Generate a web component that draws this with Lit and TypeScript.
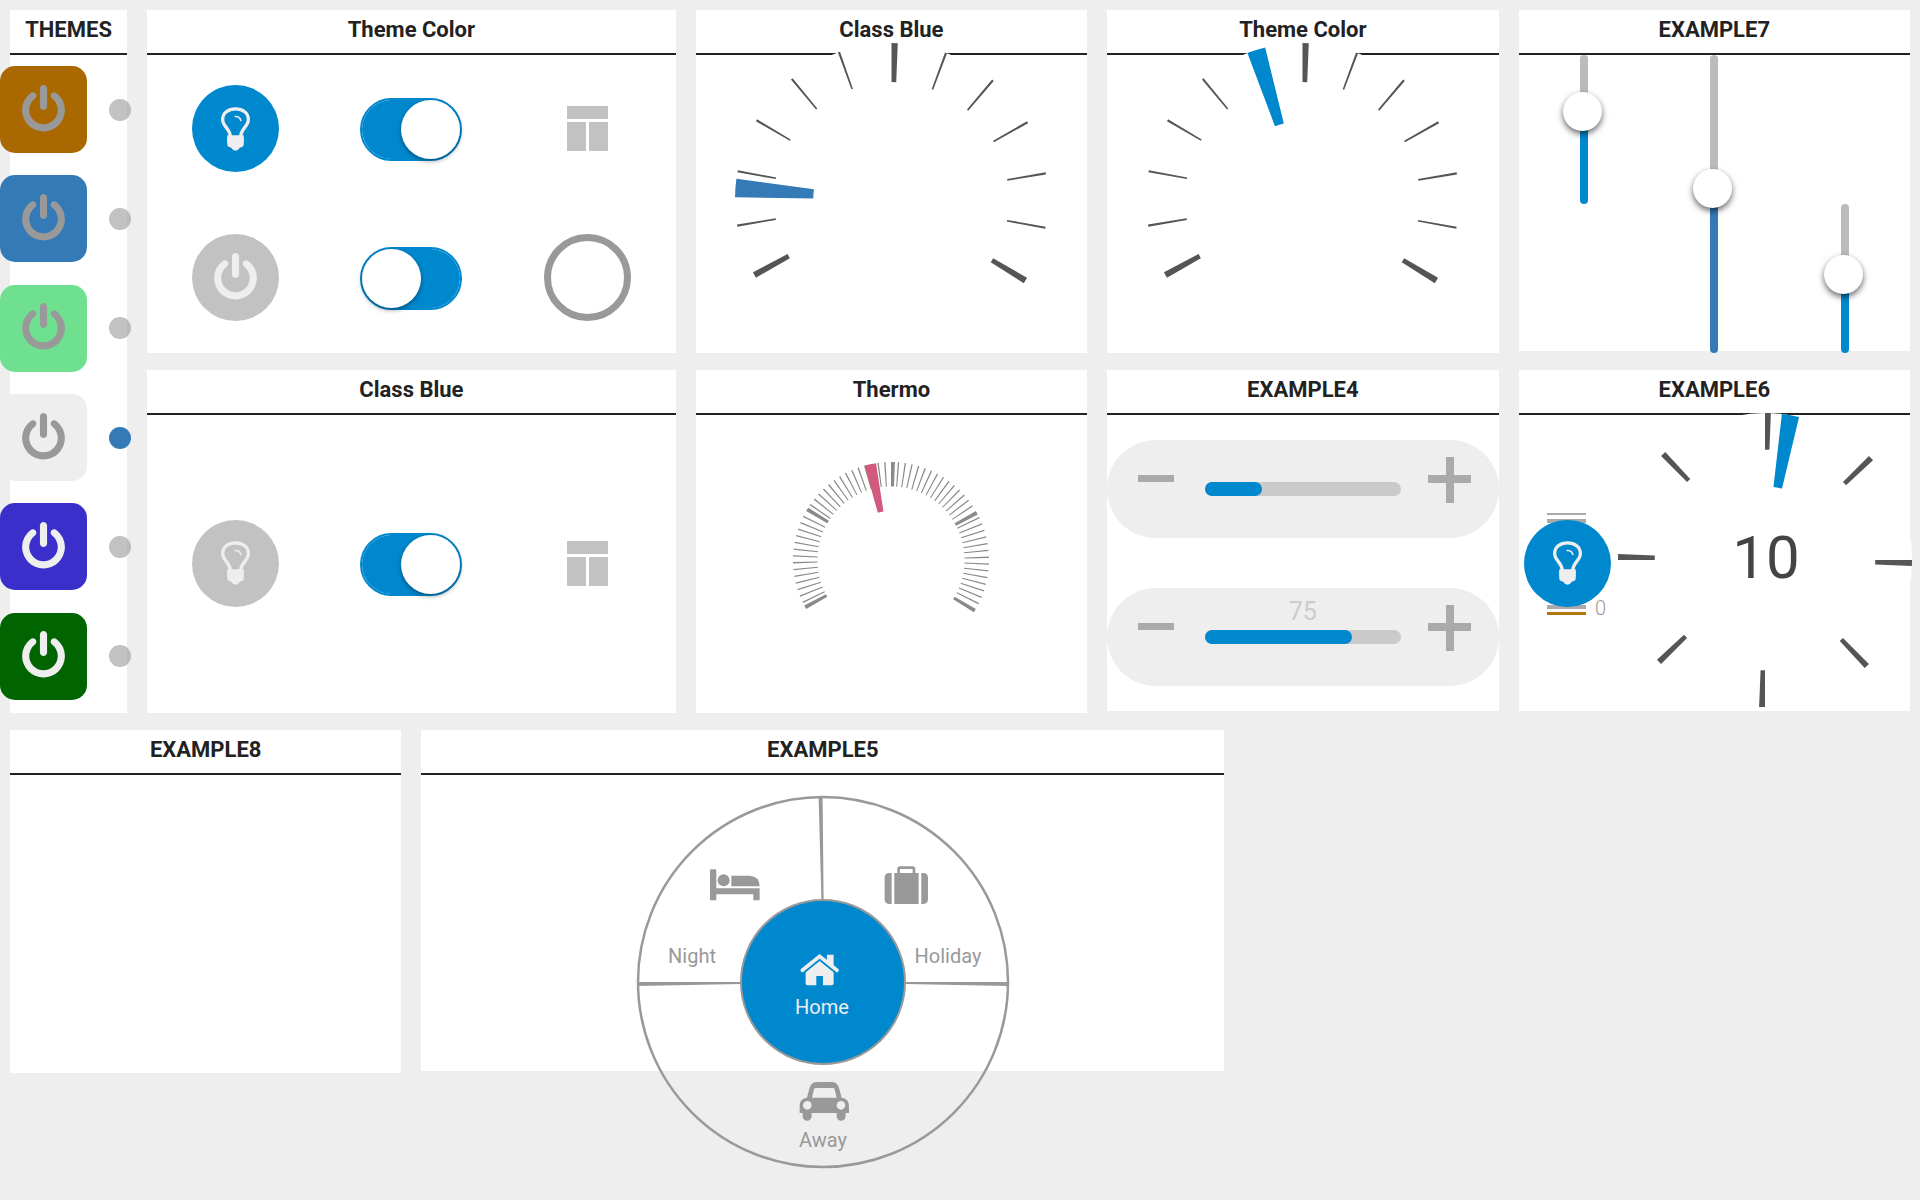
import { LitElement, html, svg, css } from "lit";
import { customElement, property } from "lit/decorators.js";

/** Ring segment between two radii and two angles (degrees, 0 = up, clockwise). */
function wedge(r0: number, r1: number, a0: number, a1: number): string {
  const p = (r: number, a: number) => {
    const t = (a * Math.PI) / 180;
    return `${(r * Math.sin(t)).toFixed(2)} ${(-r * Math.cos(t)).toFixed(2)}`;
  };
  return `M${p(r1, a0)}A${r1} ${r1} 0 0 1 ${p(r1, a1)}L${p(r0, a1)}A${r0} ${r0} 0 0 0 ${p(r0, a0)}Z`;
}

interface Dial {
  label: string;
  radius: number;
  from: number;
  to: number;
  step: number;
  majorEvery: number;
  needle: number;
  needleColor: string;
  tickColor: string;
  shiftX: number;
  shiftY: number;
  value?: string;
}

const arcDial = { radius: 156.5, from: -120, to: 120, step: 20, majorEvery: 6, tickColor: "#555", shiftX: 0, shiftY: 5 };

const dials: Record<string, Dial> = {
  blue: { ...arcDial, label: "Class Blue", needle: -89.2, needleColor: "#337ab7" },
  theme: { ...arcDial, label: "Theme Color", needle: -20.6, needleColor: "#0088cf" },
  thermo: {
    label: "Thermo", radius: 98, from: -120, to: 120, step: 4, majorEvery: 15,
    needle: -15.6, needleColor: "#d15a7e", tickColor: "#8a8a8a", shiftX: 0, shiftY: 4,
  },
  clock: {
    label: "Example 6", radius: 147, from: 0, to: 315, step: 45, majorEvery: 1,
    needle: 6.6, needleColor: "#0088cf", tickColor: "#555", shiftX: -1, shiftY: 3, value: "10",
  },
};

const power = html`<svg class="power" viewBox="0 0 1536 1792" aria-hidden="true">
  <path transform="translate(-128 0)" d="M1664 896q0 156-61 298t-164 245-245 164-298 61-298-61-245-164-164-245-61-298q0-182 80.5-343t226.5-270q43-32 95.5-25t83.5 50q32 42 24.5 94.5t-49.5 84.5q-98 74-151.5 181t-53.5 228q0 104 40.5 198.5t109.5 163.5 163.5 109.5 198.5 40.5 198.5-40.5 163.5-109.5 109.5-163.5 40.5-198.5q0-121-53.5-228t-151.5-181q-42-32-49.5-84.5t24.5-94.5q31-43 84-50t95 25q146 109 226.5 270t80.5 343zm-640-768v640q0 52-38 90t-90 38-90-38-38-90v-640q0-52 38-90t90-38 90 38 38 90z"/>
</svg>`;

const bulb = html`<svg class="bulb" viewBox="0 0 88 132" aria-hidden="true">
  <path fill="none" stroke="currentColor" stroke-width="10" d="M28 88C28 66 5 58 5 37C5 18 22 5 44 5S83 18 83 37C83 58 60 66 60 88"/>
  <path d="M20 85H68Q70 87 69 91Q71 95 69 99Q71 104 69 108Q70 114 67 119L57 123Q52 132 44 132T31 123L21 119Q18 114 19 108Q17 104 19 99Q17 95 19 91Q18 87 20 85Z"/>
  <path fill="none" stroke="currentColor" stroke-width="5" stroke-linecap="round" d="M43 28Q57 27 60 40"/>
</svg>`;

const template = html`<svg class="template" viewBox="0 0 41 45" aria-hidden="true">
  <path d="M0 0H41V13H0ZM0 16H19V45H0ZM22 16H41V45H22Z"/>
</svg>`;

const themes = [
  { name: "brown", icon: "dim" },
  { name: "blue", icon: "dim" },
  { name: "green", icon: "dim" },
  { name: "light", icon: "dim" },
  { name: "indigo", icon: "bright" },
  { name: "forest", icon: "bright" },
];

@customElement("round-dial")
export class RoundDial extends LitElement {
  @property({ attribute: false }) dial!: Dial;

  static styles = css`
    :host { display: block; flex: none; }
    svg { display: block; overflow: visible; }
    .value { font: 60px Roboto, "Liberation Sans", sans-serif; fill: #444; text-anchor: middle; }
  `;

  render() {
    const d = this.dial;
    const r = d.radius;
    const size = Math.ceil(r * 2);
    const ticks = [];
    for (let a = d.from, i = 0; a <= d.to; a += d.step, i++) {
      const width = i % d.majorEvery === 0 ? 2.3 : 0.8;
      ticks.push(svg`<path fill=${d.tickColor} d=${wedge(r * 0.75, r, a, a + width)} />`);
    }
    const face =
      d.from < 0
        ? svg`<path fill="#fff" d="${wedge(r / 2, r, d.from, 0)}${wedge(r / 2, r, 0, d.to)}" />`
        : svg`<circle fill="#fff" r=${r} />`;
    return html`<svg
      role="img"
      aria-label=${d.label}
      width=${size}
      height=${size}
      viewBox="${d.shiftX - size / 2} ${d.shiftY - size / 2} ${size} ${size}"
    >
      ${face} ${ticks}
      <path fill=${d.needleColor} d=${wedge(r / 2, r, d.needle, d.needle + 6.8)} />
      ${d.value ? svg`<text class="value" x="1" y="18">${d.value}</text>` : ""}
    </svg>`;
  }
}

@customElement("mode-wheel")
export class ModeWheel extends LitElement {
  static styles = css`
    :host { display: block; flex: none; }
    svg { display: block; }
    a { fill: #999; text-decoration: none; }
    .active { fill: #eee; }
    .label { font: 20px Roboto, "Liberation Sans", sans-serif; text-anchor: middle; }
    .ring { fill: none; stroke: #999; stroke-width: 2.5; }
    .hub { fill: #0088cf; stroke: #999; stroke-width: 2; }
    .spoke { fill: #999; }
  `;

  render() {
    const art = "translate(-202.7 -261.7) scale(.33333)";
    return html`<svg width="376" height="376" viewBox="-188 -188 376 376" aria-label="House mode">
      <circle class="ring" r="185" />
      <path class="spoke" d="M-4.4 -185H-.4L.6 -82H-1.6ZM185 0V4L82 2V0ZM-185 0V4L-82 2V0Z" />
      <circle class="hub" r="82" />
      <a href="#night">
        <g transform=${art}>
          <path d="M273 447H284Q288 447 288 451V504H418V540H399V522H288V540H269V451Q269 447 273 447ZM333 466H388Q418 468 418 498H333Z" />
          <circle cx="310" cy="480" r="18" />
        </g>
        <text class="label" x="-131" y="-19">Night</text>
      </a>
      <a href="#holiday">
        <g transform=${art}>
          <path d="M822 458H895V551H822ZM814 458V551H807Q793 551 793 537V472Q793 458 807 458ZM903 458H909Q923 458 923 472V537Q923 551 909 551H903Z" />
          <path fill="none" stroke="#999" stroke-width="8" d="M835 460V446Q835 442 839 442H877Q881 442 881 446V460" />
        </g>
        <text class="label" x="125" y="-19">Holiday</text>
      </a>
      <a href="#away">
        <g transform=${art}>
          <path fill-rule="evenodd" d="M560 1132L568 1102Q573 1085 590 1085H634Q651 1085 656 1102L664 1132Q686 1134 686 1158V1178H676V1188A13.500 13.500 0 0 1 649 1188V1178H574V1188A13.500 13.500 0 0 1 547 1188V1178H538V1158Q538 1134 560 1132ZM575 1132H649L643 1107Q642 1103 638 1103H586Q582 1103 581 1107ZM561 1142A13 13 0 1 0 561 1168A13 13 0 1 0 561 1142ZM662 1142A13 13 0 1 0 662 1168A13 13 0 1 0 662 1142Z" />
        </g>
        <text class="label" x="0" y="165">Away</text>
      </a>
      <a class="active" href="#home">
        <g transform=${art}>
          <path d="M598 722L640 756V789Q640 795 634 795H608V767H588V795H562Q556 795 556 789V756ZM620 703H640V738L620 722Z" />
          <path fill="none" stroke="#eee" stroke-width="11" stroke-linecap="round" d="M546 750L598 708L650 750" />
          <path fill="none" stroke="#0088cf" stroke-width="3" d="M548 760L598 719L648 760" />
        </g>
        <text class="label" x="-1" y="32">Home</text>
      </a>
    </svg>`;
  }
}

@customElement("app-root")
export class AppRoot extends LitElement {
  static styles = css`
    :host {
      --accent: #0088cf;
      --blue: #337ab7;
      display: block;
      box-sizing: border-box;
      min-height: 100vh;
      padding: 10px;
      background: #eee;
      color: #222;
      font-family: Roboto, "Liberation Sans", sans-serif;
      overflow-x: clip;
    }
    .board {
      display: grid;
      grid-template-columns: repeat(14, minmax(0, 1fr));
      grid-auto-rows: 343px;
      gap: 17px 20px;
    }
    .panel { display: flex; flex-direction: column; min-height: 0; background: #fff; }
    .w1 { grid-column: span 1; }
    .w3 { grid-column: span 3; }
    .w4 { grid-column: span 4; }
    .w6 { grid-column: span 6; }
    .tall { grid-row: span 2; }
    .short { margin-bottom: 2px; }
    .title {
      flex: none;
      box-sizing: border-box;
      height: 45px;
      margin: 0;
      border-bottom: 2px solid #222;
      font-size: 22px;
      font-weight: 700;
      line-height: 40px;
      text-align: center;
      white-space: nowrap;
    }
    .body { flex: 1; min-height: 0; }
    .center { display: flex; align-items: center; justify-content: center; }

    .themes { display: flex; flex-direction: column; margin: 0 -4px 0 -10px; padding-bottom: 2px; }
    .theme { flex: 1; display: flex; align-items: center; justify-content: space-between; }
    .swatch {
      display: grid;
      place-items: center;
      width: 87px;
      height: 87px;
      padding: 0;
      border: 0;
      border-radius: 15px;
    }
    .brown { background: #aa6900; }
    .blue { background: var(--blue); }
    .green { background: #6ee08f; }
    .light { background: #eee; }
    .indigo { background: #3a2fcb; }
    .forest { background: #006400; }
    .dim { color: #999; }
    .bright { color: #eee; }
    .dot {
      appearance: none;
      width: 22px;
      height: 22px;
      margin: 0;
      border-radius: 50%;
      background: rgba(153, 153, 153, 0.6);
    }
    .dot:checked { background: var(--blue); }

    .cells {
      display: grid;
      grid-template-columns: repeat(3, 1fr);
      grid-auto-rows: 1fr;
      place-items: center;
    }
    .round {
      display: grid;
      place-items: center;
      box-sizing: border-box;
      width: 87px;
      height: 87px;
      margin: 0;
      padding: 0;
      border: 0;
      border-radius: 50%;
      background: #c2c2c2;
      color: #eee;
    }
    .cells .round,
    .cells .plain { margin-bottom: 2px; }
    .on { background: var(--accent); }
    .hollow { border: 7px solid #999; background: none; }
    .plain { display: block; padding: 0; border: 0; background: none; color: #c2c2c2; }
    .power { display: block; width: 43px; height: 50px; fill: currentColor; }
    .bulb { display: block; width: 29px; height: 44px; fill: currentColor; }
    .template { display: block; width: 41px; height: 45px; fill: currentColor; }
    .toggle {
      appearance: none;
      display: block;
      box-sizing: border-box;
      width: 102px;
      height: 63px;
      margin: 0;
      border: 2px solid var(--accent);
      border-radius: 32px;
      background: #fff;
      box-shadow: inset 0 0 0 32px var(--accent);
    }
    .toggle::before {
      content: "";
      display: block;
      width: 59px;
      height: 59px;
      border-radius: 50%;
      background: #fff;
      box-shadow: 0 2px 5px rgba(0, 0, 0, 0.4);
    }
    .toggle:checked::before { margin-left: auto; }

    .sliders {
      display: grid;
      grid-template-columns: repeat(3, 1fr);
      grid-template-rows: repeat(2, 149px);
      justify-items: center;
    }
    .slider {
      appearance: none;
      writing-mode: vertical-lr;
      direction: rtl;
      width: 8px;
      height: 100%;
      margin: 0;
      border-radius: 4px;
      background: linear-gradient(to top, var(--fill, var(--accent)) var(--level), #bbb var(--level));
    }
    .slider::-webkit-slider-runnable-track { width: 8px; height: 100%; background: none; }
    .slider::-webkit-slider-thumb {
      appearance: none;
      width: 39px;
      height: 39px;
      margin-left: -17px;
      border-radius: 50%;
      background: #fff;
      box-shadow: 0 3px 6px rgba(0, 0, 0, 0.6);
    }
    .full { grid-row: span 2; --fill: var(--blue); }
    .lower { grid-row: 2; grid-column: 3; }

    .spinners { display: grid; grid-auto-rows: 1fr; align-items: center; }
    .spinner {
      display: grid;
      grid-template-columns: 1fr 2fr 1fr;
      align-items: center;
      height: 98px;
      border-radius: 49px;
      background: #eee;
    }
    .step { display: block; height: 98px; padding: 0; border: 0; background: none; }
    .sign { display: block; width: 98px; height: 98px; margin: 0 auto; fill: #aaa; }
    .bar { position: relative; height: 14px; border-radius: 7px; background: #cacaca; }
    .level { height: 14px; border-radius: 7px; background: var(--accent); }
    .reading {
      position: absolute;
      inset: auto 0 100% 0;
      color: #ccc;
      font-size: 25px;
      line-height: 36px;
      text-align: center;
    }

    .split { display: grid; grid-template-columns: 1fr 3fr; place-items: center; }
    .stack { display: grid; place-items: center; }
    .stack > * { grid-area: 1 / 1; }
    .gauge { display: block; width: 98px; height: 120px; overflow: visible; }
    .gauge-label { font-size: 20px; fill: #999; font-weight: 300; }
    .wheel { display: flex; justify-content: center; align-items: flex-start; padding-top: 19px; }
  `;

  private panel(title: string, size: string, body: unknown, kind = "") {
    return html`<section class="panel ${size}">
      <h2 class="title">${title}</h2>
      <div class="body ${kind}">${body}</div>
    </section>`;
  }

  private spinner(value: number, showValue: boolean) {
    return html`<div class="spinner" role="group" aria-label="Level">
      <button class="step" aria-label="Decrease">
        <svg class="sign" viewBox="0 0 98 98"><path d="M31 35H67V42H31Z" /></svg>
      </button>
      <div class="bar" role="meter" aria-valuemin="0" aria-valuemax="100" aria-valuenow=${value}>
        <div class="level" style="width:${value}%"></div>
        ${showValue ? html`<span class="reading">${value}</span>` : ""}
      </div>
      <button class="step" aria-label="Increase">
        <svg class="sign" viewBox="0 0 98 98"><path d="M45 17H53V35H70V43H53V63H45V43H27V35H45Z" /></svg>
      </button>
    </div>`;
  }

  private toggle(checked: boolean) {
    return html`<input class="toggle" type="checkbox" role="switch" aria-label="Switch" ?checked=${checked} />`;
  }

  render() {
    return html`<main class="board">
      ${this.panel(
        "THEMES",
        "w1 tall",
        themes.map(
          (t, i) => html`<div class="theme">
            <button class="swatch ${t.name} ${t.icon}" aria-label="Theme ${t.name}">${power}</button>
            <input class="dot" type="radio" name="theme" aria-label="Use theme ${t.name}" ?checked=${i === 3} />
          </div>`
        ),
        "themes"
      )}
      ${this.panel(
        "Theme Color",
        "w4",
        html`
          <button class="round on" aria-label="Light">${bulb}</button>
          ${this.toggle(true)}
          <button class="plain" aria-label="Template">${template}</button>
          <button class="round" aria-label="Power">${power}</button>
          ${this.toggle(false)}
          <button class="round hollow" aria-label="Push"></button>
        `,
        "cells"
      )}
      ${this.panel("Class Blue", "w3", html`<round-dial .dial=${dials.blue}></round-dial>`, "center")}
      ${this.panel("Theme Color", "w3", html`<round-dial .dial=${dials.theme}></round-dial>`, "center")}
      ${this.panel(
        "EXAMPLE7",
        "w3 short",
        html`
          <input class="slider" type="range" aria-label="Slider 1" value="66" style="--level:66%" />
          <input class="slider full" type="range" aria-label="Slider 2" value="56" style="--level:56%" />
          <input class="slider lower" type="range" aria-label="Slider 3" value="54" style="--level:54%" />
        `,
        "sliders"
      )}
      ${this.panel(
        "Class Blue",
        "w4",
        html`
          <button class="round" aria-label="Light">${bulb}</button>
          ${this.toggle(true)}
          <button class="plain" aria-label="Template">${template}</button>
        `,
        "cells"
      )}
      ${this.panel("Thermo", "w3", html`<round-dial .dial=${dials.thermo}></round-dial>`, "center")}
      ${this.panel("EXAMPLE4", "w3 short", html`${this.spinner(29, false)}${this.spinner(75, true)}`, "spinners")}
      ${this.panel(
        "EXAMPLE6",
        "w3 short",
        html`
          <div class="stack">
            <svg class="gauge" viewBox="0 -9 98 120" role="img" aria-label="Level 0">
              <path fill="#aaa" d="M28 1H67V3H28ZM28 7H67V11H28ZM28 93H67V97H28Z" />
              <path fill="#b4770f" d="M28 100H67V103H28Z" />
              <text class="gauge-label" x="76" y="103">0</text>
            </svg>
            <button class="round on" aria-label="Light">${bulb}</button>
          </div>
          <round-dial .dial=${dials.clock}></round-dial>
        `,
        "split"
      )}
      ${this.panel("EXAMPLE8", "w3", "")}
      ${this.panel("EXAMPLE5", "w6 short", html`<mode-wheel></mode-wheel>`, "wheel")}
    </main>`;
  }
}
